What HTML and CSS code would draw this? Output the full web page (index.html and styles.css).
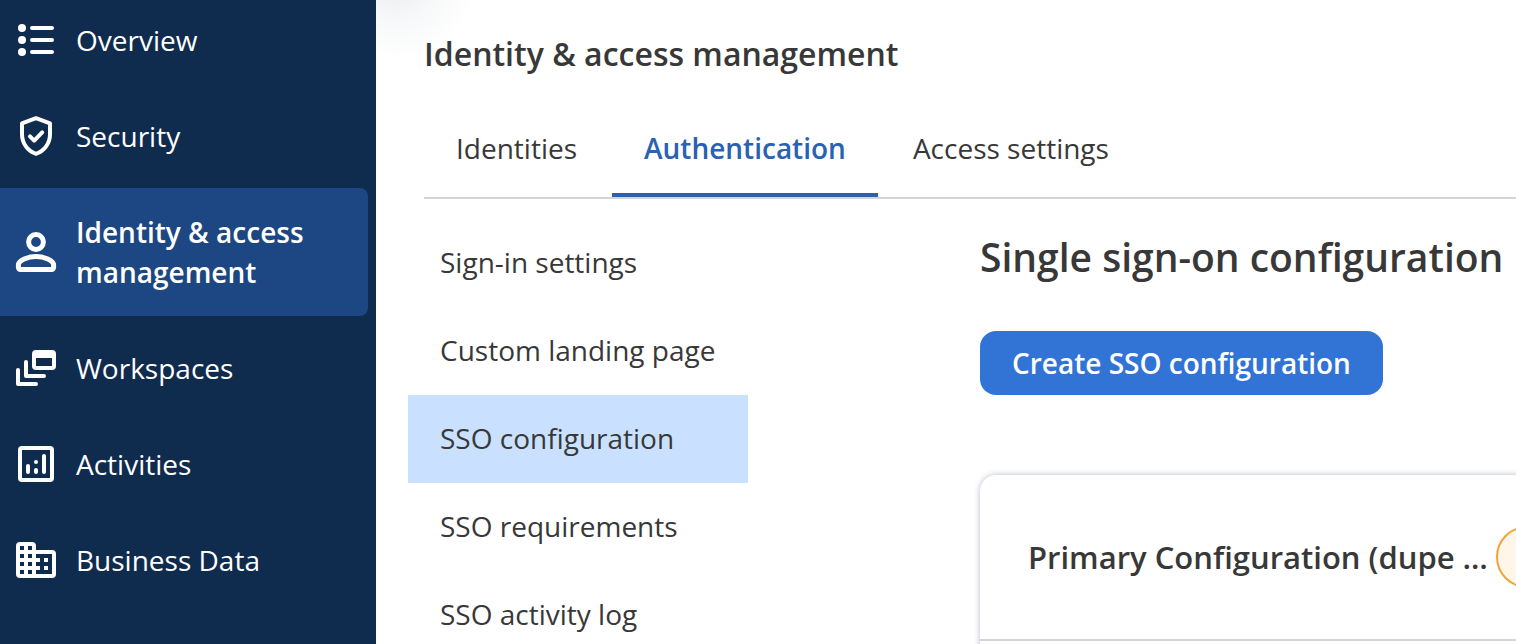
FILE: index.html
```html
<!DOCTYPE html>
<html lang="en">
<head>
<meta charset="utf-8">
<title>Identity &amp; access management</title>
<link rel="stylesheet" href="styles.css">
</head>
<body>
<div class="app">
  <nav class="sidebar" aria-label="Main">
    <a class="nav-item" href="#">
      <svg class="nav-icon" viewBox="0 0 24 24" aria-hidden="true"><g fill="currentColor"><circle cx="5" cy="6" r="2"/><circle cx="5" cy="12" r="2"/><circle cx="5" cy="18" r="2"/></g><path class="stroke" d="M10 6h10M10 12h10M10 18h10"/></svg>
      <span>Overview</span>
    </a>
    <a class="nav-item" href="#">
      <svg class="nav-icon" viewBox="0 0 24 24" aria-hidden="true"><path class="stroke" d="M12 3.1l7 2.6v5.4c0 4.5-2.8 8.4-7 9.8-4.200-1.400-7-5.300-7-9.800V5.700z"/><path class="stroke" d="M9 12.200l2.100 2.100 4-4.100"/></svg>
      <span>Security</span>
    </a>
    <a class="nav-item nav-item-active" href="#" aria-current="page">
      <svg class="nav-icon" viewBox="0 0 24 24" aria-hidden="true"><g class="stroke stroke-heavy"><circle cx="12" cy="7" r="3.700"/><path d="M3.200 18.500c0-2.500 4.800-4.200 8.800-4.200s8.800 1.700 8.800 4.200v1.300a1 1 0 0 1-1 1H4.200a1 1 0 0 1-1-1z"/></g></svg>
      <span>Identity &amp; access management</span>
    </a>
    <a class="nav-item" href="#">
      <svg class="nav-icon" viewBox="0 0 24 24" aria-hidden="true"><path fill="currentColor" fill-rule="evenodd" d="M12 3h8a2 2 0 0 1 2 2v6a2 2 0 0 1-2 2h-8a2 2 0 0 1-2-2V5a2 2 0 0 1 2-2zM12 7v4h8V7z"/><path class="stroke" d="M7 9v7h9M3 13v7h9"/></svg>
      <span>Workspaces</span>
    </a>
    <a class="nav-item" href="#">
      <svg class="nav-icon" viewBox="0 0 24 24" aria-hidden="true"><rect class="stroke" x="4" y="4" width="16" height="16" rx="1"/><path class="stroke" d="M8 13v3M12 11v0M12 15v1M16 8v8"/></svg>
      <span>Activities</span>
    </a>
    <a class="nav-item" href="#">
      <svg class="nav-icon" viewBox="0 0 24 24" aria-hidden="true"><path fill="currentColor" d="M12 7V5a2 2 0 0 0-2-2H4a2 2 0 0 0-2 2v14a2 2 0 0 0 2 2h16a2 2 0 0 0 2-2V9a2 2 0 0 0-2-2zM6 19H4v-2h2zm0-4H4v-2h2zm0-4H4V9h2zm0-4H4V5h2zm4 12H8v-2h2zm0-4H8v-2h2zm0-4H8V9h2zm0-4H8V5h2zm10 12h-8v-2h2v-2h-2v-2h2v-2h-2V9h8zm-2-8h-2v2h2zm0 4h-2v2h2z"/></svg>
      <span>Business Data</span>
    </a>
  </nav>
  <main class="main">
    <h1 class="page-title">Identity &amp; access management</h1>
    <nav class="tabs" aria-label="Sections">
      <a class="tab" href="#">Identities</a>
      <a class="tab tab-active" href="#" aria-current="page">Authentication</a>
      <a class="tab" href="#">Access settings</a>
    </nav>
    <div class="columns">
      <nav class="submenu" aria-label="Authentication">
        <a class="submenu-item" href="#">Sign-in settings</a>
        <a class="submenu-item" href="#">Custom landing page</a>
        <a class="submenu-item submenu-item-active" href="#" aria-current="page">SSO configuration</a>
        <a class="submenu-item" href="#">SSO requirements</a>
        <a class="submenu-item" href="#">SSO activity log</a>
      </nav>
      <section class="content">
        <h2 class="content-title">Single sign-on configuration</h2>
        <button class="create-button" type="button">Create SSO configuration</button>
        <article class="card">
          <header class="card-header">
            <h3 class="card-title">Primary Configuration (dupe …</h3>
            <span class="badge"></span>
          </header>
        </article>
      </section>
    </div>
  </main>
</div>
</body>
</html>
```
FILE: styles.css
```css
* { box-sizing: border-box; }

body {
  margin: 0;
  overflow: hidden;
  background: #fff;
  color: #383838;
  font: 28px/40px "Open Sans", "Noto Sans", sans-serif;
}

a { color: inherit; text-decoration: none; }

h1, h2, h3 { margin: 0; font-weight: 650; }

.app { display: flex; height: 100vh; }

.sidebar {
  display: flex;
  flex: none;
  flex-direction: column;
  gap: 8px;
  width: 376px;
  padding-right: 8px;
  background: #0f2b4e;
  color: #fff;
}

.nav-item {
  display: flex;
  align-items: center;
  gap: 16px;
  padding: 24px 12px;
  border-radius: 0 8px 8px 0;
}

.nav-item:first-child { padding-top: 20px; }

.nav-item-active { background: #1d4782; font-weight: 650; }

.nav-icon { flex: none; width: 48px; height: 48px; margin: -4px 0; }

.stroke {
  fill: none;
  stroke: currentColor;
  stroke-width: 2;
  stroke-linecap: round;
  stroke-linejoin: round;
}

.stroke-heavy { stroke-width: 2.5; }

.main {
  flex: 1;
  min-width: 0;
  padding: 34px 0 0 48px;
  overflow: hidden;
  background: radial-gradient(circle at 20px -20px, #e9ebef, #f7f8f9 40px, #fff 80px);
}

.page-title { font-size: 32px; line-height: 40px; }

.tabs {
  display: flex;
  gap: 3px;
  margin-top: 24px;
  border-bottom: 2px solid #d5d5d5;
}

.tab { padding: 30px 32px 25px; border-bottom: 4px solid transparent; }

.tab-active { border-color: #2961b3; color: #2961b3; font-weight: 650; }

.columns { display: flex; gap: 232px; margin-left: -16px; }

.submenu { flex: none; width: 340px; padding-top: 20px; }

.submenu-item { display: block; padding: 23px 32px 25px; }

.submenu-item-active { background: #c9e1ff; }

.content { flex: 1; min-width: 0; padding-top: 34px; white-space: nowrap; }

.content-title { font-size: 39px; line-height: 48px; }

.create-button {
  display: block;
  margin-top: 50px;
  padding: 12px 32px;
  border: 0;
  border-radius: 16px;
  background: #3273d6;
  color: #fff;
  font: inherit;
  font-weight: 650;
}

.card {
  width: 1000px;
  min-height: 400px;
  margin-top: 80px;
  border-radius: 16px;
  box-shadow: 0 0 6px #b4bccb;
}

.card-header {
  display: flex;
  align-items: center;
  gap: 8px;
  padding: 51px 48px;
  border-bottom: 2px solid #d5d5d5;
}

.card-title { flex: none; font-size: 31px; line-height: 40px; }

.badge {
  width: 160px;
  height: 62px;
  border: 2px solid #f2a33a;
  border-radius: 32px;
  background: #fff6ea;
}
```
